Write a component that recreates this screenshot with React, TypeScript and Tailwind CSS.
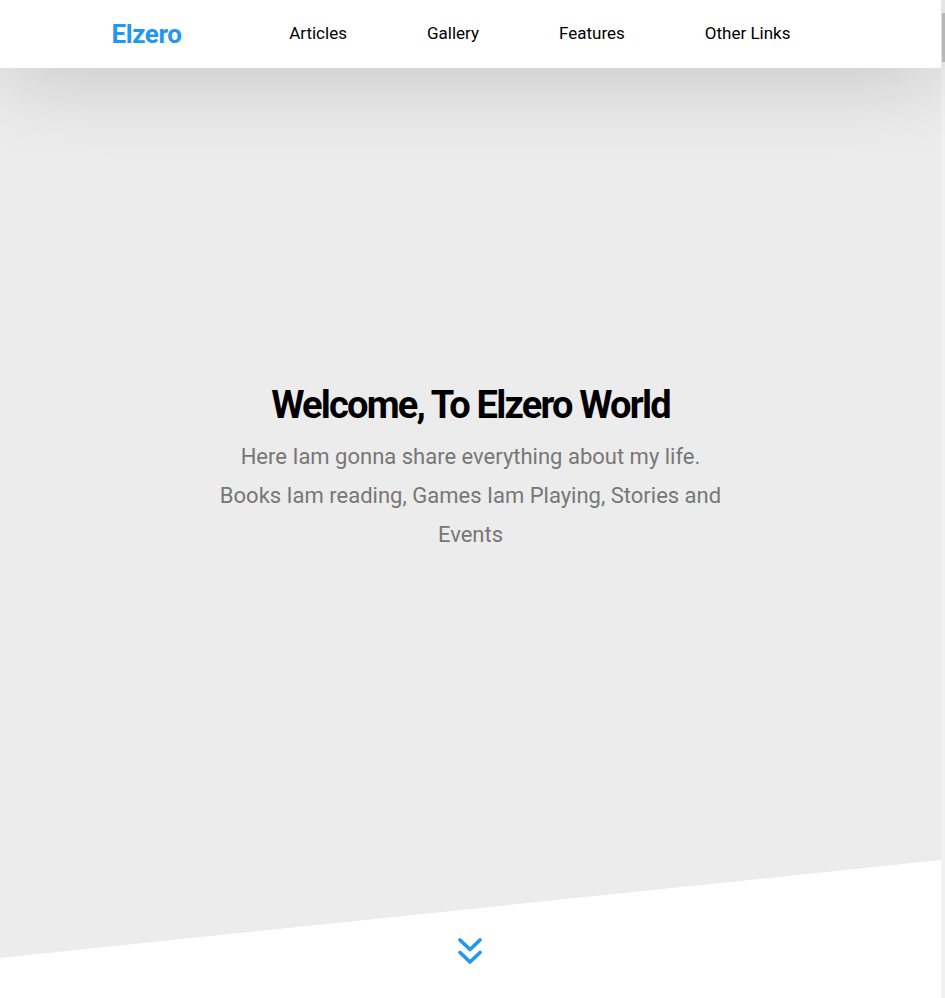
import React from "react";

export default function App() {
  return (
    <div
      className="flex h-[998px] overflow-hidden bg-white"
      style={{ fontFamily: "Roboto, 'Open Sans', sans-serif" }}
    >
      <div className="relative min-w-0 flex-1">
        <header className="relative z-10 h-[68px] bg-white shadow-[0_0_90px_rgba(0,0,0,0.22)]">
          <div className="mx-auto flex h-full w-[750px] items-center justify-between px-[15px]">
            <a className="pl-[1px] text-[26px] font-bold tracking-[-0.4px] text-[#2196f3]">Elzero</a>
            <nav className="flex items-center">
              <a className="px-10 text-[17px] text-black">Articles</a>
              <a className="px-10 text-[17px] text-black">Gallery</a>
              <a className="px-10 text-[17px] text-black">Features</a>
              <a className="px-10 text-[17px] text-black">Other Links</a>
            </nav>
          </div>
        </header>
        <section className="h-[890px] bg-[#ececec] [clip-path:polygon(0_0,100%_0,100%_792px,0_100%)]">
          <div className="flex flex-col items-center pt-[315px] text-center">
            <h1 className="text-[38px] font-bold leading-[44px] tracking-[-1.8px] text-black">
              Welcome, To Elzero World
            </h1>
            <p className="mt-[10px] w-[514px] text-[22px] leading-[39px] text-[#777777]">
              Here Iam gonna share everything about my life. Books Iam reading, Games Iam Playing, Stories and Events
            </p>
          </div>
        </section>
        <div className="absolute left-[458px] top-[937px]">
          <svg width="24" height="28" viewBox="0 0 24 28" fill="none" stroke="#2196f3" strokeWidth="3.6" strokeLinecap="round" strokeLinejoin="round">
            <path d="M2 3 L12 12.5 L22 3" />
            <path d="M2 15.5 L12 25 L22 15.5" />
          </svg>
        </div>
      </div>
      <aside className="flex w-[4px] shrink-0 justify-end bg-[#f1f1f1]">
        <div className="mt-[13px] h-[49px] w-[3px] bg-[#c1c1c1]" />
      </aside>
    </div>
  );
}
